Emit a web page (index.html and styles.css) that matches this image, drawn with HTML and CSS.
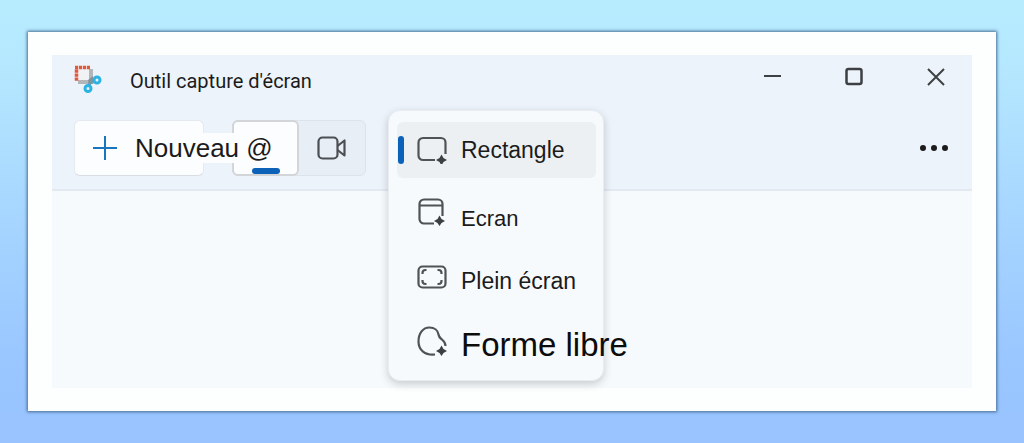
FILE: index.html
```html
<!DOCTYPE html>
<html lang="fr">
<head>
  <meta charset="UTF-8">
  <title>Outil capture d'écran</title>
  <meta name="viewport" content="width=device-width, initial-scale=1.0">
  <link rel="stylesheet" href="styles.css">
</head>
<body>
  <main class="frame">
    <div class="window">
      <header class="titlebar">
        <svg class="app-icon" width="28" height="28" viewBox="0 0 28 28" fill="none">
          <path d="M4 4h12v12H4z" fill="#f1f2f3"/>
          <path d="M15 4h4v15h-4zM4 15h13v4H4z" fill="#b3b6b9"/>
          <path d="M14 15l5-4v5l-4 4z" fill="#8b9095"/>
          <path d="M1 2.500h15M2.500 4.500v12" stroke="#e2583a" stroke-width="3.500" stroke-dasharray="3.200 0.800"/>
          <path d="M16 18l5-2M16 17l-1 5" stroke="#7698a8" stroke-width="3"/>
          <circle cx="23" cy="15" r="3" stroke="#2bb4e3" stroke-width="3"/>
          <circle cx="14" cy="23.500" r="3" stroke="#2bb4e3" stroke-width="3"/>
        </svg>
        <h1 class="title">Outil capture d'écran</h1>
        <div class="window-controls">
          <button class="icon-btn" aria-label="Réduire">
            <svg width="20" height="20" viewBox="0 0 20 20"><path d="M2 9h17" stroke-width="2"/></svg>
          </button>
          <button class="icon-btn" aria-label="Agrandir">
            <svg width="20" height="20" viewBox="0 0 20 20"><rect x="2.500" y="2" width="15" height="15" rx="2" stroke-width="2.500"/></svg>
          </button>
          <button class="icon-btn" aria-label="Fermer">
            <svg width="20" height="20" viewBox="0 0 20 20"><path d="M2 2l16 16M18 2L2 18" stroke-width="2"/></svg>
          </button>
        </div>
      </header>

      <div class="toolbar">
        <button class="new-btn">
          <svg width="24" height="24" viewBox="0 0 24 24" fill="none" stroke="#1976bd" stroke-width="2"><path d="M12 0v24M0 12h24"/></svg>
          <span class="new-label">Nouveau</span>
        </button>
        <div class="mode-group">
          <button class="mode active">@</button>
          <button class="mode" aria-label="Vidéo">
            <svg width="30" height="24" viewBox="0 0 30 24" fill="none" stroke="#4b4f54" stroke-width="2.200" stroke-linejoin="round">
              <rect x="1.500" y="1.500" width="19" height="21" rx="4"/>
              <path d="M20.500 10l7-5.500v15l-7-5.500"/>
            </svg>
          </button>
        </div>
        <div class="shape-picker">
          <div class="menu" role="menu">
            <button class="menu-item selected" role="menuitem">
              <svg width="30" height="28" viewBox="0 0 30 28">
                <path d="M18 24H6a4.500 4.500 0 0 1-4.500-4.500v-13A4.500 4.500 0 0 1 6 2h18a4.500 4.500 0 0 1 4.500 4.500V18"/>
                <path class="spark" d="M24.500 18.500l2 3.500 3.500 2-3.500 2-2 3.500-2-3.500-3.500-2 3.500-2z"/>
              </svg>
              <span>Rectangle</span>
            </button>
            <button class="menu-item" role="menuitem">
              <svg width="30" height="28" viewBox="0 0 30 28">
                <path d="M17 25.500H7A4.500 4.500 0 0 1 2.500 21V6A4.500 4.500 0 0 1 7 1.500h14A4.500 4.500 0 0 1 25.500 6v12M2.500 7.500h23"/>
                <path class="spark" d="M22.500 17.500l2 3.500 3.500 2-3.500 2-2 3-2-3-3.500-2 3.500-2z"/>
              </svg>
              <span class="label-small">Ecran</span>
            </button>
            <button class="menu-item" role="menuitem">
              <svg width="30" height="24" viewBox="0 0 30 24">
                <rect x="1.500" y="1.500" width="27" height="21" rx="4"/>
                <path d="M5.500 9V8a3 3 0 0 1 3-3h1M20.500 5h1a3 3 0 0 1 3 3v1M24.500 15v1a3 3 0 0 1-3 3h-1M9.500 19h-1a3 3 0 0 1-3-3v-1"/>
              </svg>
              <span>Plein écran</span>
            </button>
            <button class="menu-item" role="menuitem">
              <svg width="30" height="30" viewBox="0 0 30 30">
                <path d="M18 28.500C8 29.500 1.500 24 1.500 15.500 1.500 7 6 1.500 12.500 1.500c5 0 8.500 3 9 7 .4 3 1.500 3.500 4 5.500 2 1.700 3 3.500 3 6"/>
                <path class="spark" d="M24.500 19.500l2 3.500 3.500 2-3.500 2-2 3-2-3-3.500-2 3.500-2z"/>
              </svg>
              <span class="label-large">Forme libre</span>
            </button>
          </div>
        </div>
        <button class="icon-btn more" aria-label="Plus">
          <svg width="28" height="8" viewBox="0 0 28 8"><g fill="#1b1b1b" stroke="none"><circle cx="3" cy="4" r="3"/><circle cx="14" cy="4" r="3"/><circle cx="25" cy="4" r="3"/></g></svg>
        </button>
      </div>
    </div>
  </main>
</body>
</html>
```

FILE: styles.css
```css
* {
  box-sizing: border-box;
}

body {
  margin: 0;
  min-height: 100vh;
  display: flex;
  padding: 32px 28px;
  background: linear-gradient(#b7ecfe 0%, #b5e8fe 15%, #a6d5ff 50%, #9ac7ff 80%, #98c3ff 100%);
  font-family: "Liberation Sans", Arial, sans-serif;
  color: #1b1b1b;
}

button {
  font: inherit;
  color: inherit;
  border: none;
  background: none;
  padding: 0;
}

.frame {
  flex: 1;
  display: flex;
  padding: 23px 24px;
  background: #fdfefe;
  box-shadow: 0 0 3px 1px #456b93;
}

.window {
  flex: 1;
  background: #f6fafd;
}

.titlebar {
  display: flex;
  align-items: center;
  height: 48px;
  padding: 0 22px;
  background: #edf3fa;
}

.title {
  margin: 4px 0 0 28px;
  font: 20px Roboto, "Liberation Sans", sans-serif;
}

.window-controls {
  display: flex;
  gap: 62px;
  margin: 0 4px 4px auto;
}

.icon-btn {
  display: flex;
}

.icon-btn svg {
  fill: none;
  stroke: #3d4043;
}

.toolbar {
  display: flex;
  align-items: center;
  height: 88px;
  padding: 4px 24px 0 22px;
  background: #edf3fa;
  border-bottom: 2px solid #e3e9f1;
}

.new-btn {
  display: flex;
  align-items: center;
  gap: 18px;
  width: 130px;
  height: 56px;
  padding: 0 18px;
  border: 1px solid #e5eaf0;
  border-bottom-color: #d8dde3;
  border-radius: 6px;
  background: #fcfdfe;
  font-size: 26px;
}

.new-btn svg {
  flex: none;
}

/* the label runs past the button, over the mode group */
.new-label {
  position: relative;
  z-index: 1;
  line-height: 30px;
  background: #fcfdfe;
}

.mode-group {
  display: flex;
  width: 134px;
  height: 56px;
  margin-left: 28px;
  border: 1px solid #dde3ea;
  border-radius: 6px;
  background: #e8eef5;
}

.mode {
  flex: 1;
  display: flex;
  align-items: center;
  justify-content: center;
  font-size: 26px;
}

.mode.active {
  position: relative;
  flex: none;
  width: 67px;
  margin: -1px 0 -1px -1px;
  padding-right: 12px;
  border: 2px solid #d3d5d8;
  border-radius: 6px;
  background: #fcfdfe;
}

.mode.active::after {
  content: "";
  position: absolute;
  bottom: 0;
  left: 18px;
  width: 28px;
  height: 6px;
  border-radius: 3px;
  background: #0c62b8;
}

.shape-picker {
  position: relative;
  align-self: flex-start;
  margin-left: 22px;
}

.menu {
  position: absolute;
  top: 3px;
  left: 0;
  display: grid;
  grid-template-columns: minmax(0, 1fr);
  gap: 9px;
  width: 216px;
  padding: 11px 7px 7px 8px;
  border: 1px solid #e9edf1;
  border-radius: 12px;
  background: #f7fafd;
  box-shadow: 0 3px 8px #00000030;
}

.menu-item {
  position: relative;
  display: grid;
  grid-template-columns: 30px auto;
  align-items: baseline;
  align-content: center;
  justify-content: start;
  gap: 14px;
  height: 56px;
  padding-left: 20px;
  border-radius: 6px;
  font-size: 23px;
  white-space: nowrap;
}

.menu-item svg {
  fill: none;
  stroke: #505356;
  stroke-width: 2.2;
}

.menu-item .spark {
  fill: #3d4043;
  stroke: none;
}

.menu-item.selected {
  align-items: center;
  background: #edf0f3;
}

.menu-item.selected::before {
  content: "";
  position: absolute;
  top: 14px;
  left: 1px;
  width: 6px;
  height: 28px;
  border-radius: 3px;
  background: #0c62b8;
}

.label-small {
  font-size: 22px;
}

.label-large {
  font-size: 33px;
  color: #0c0c0c;
}

.more {
  margin-left: auto;
}
```
